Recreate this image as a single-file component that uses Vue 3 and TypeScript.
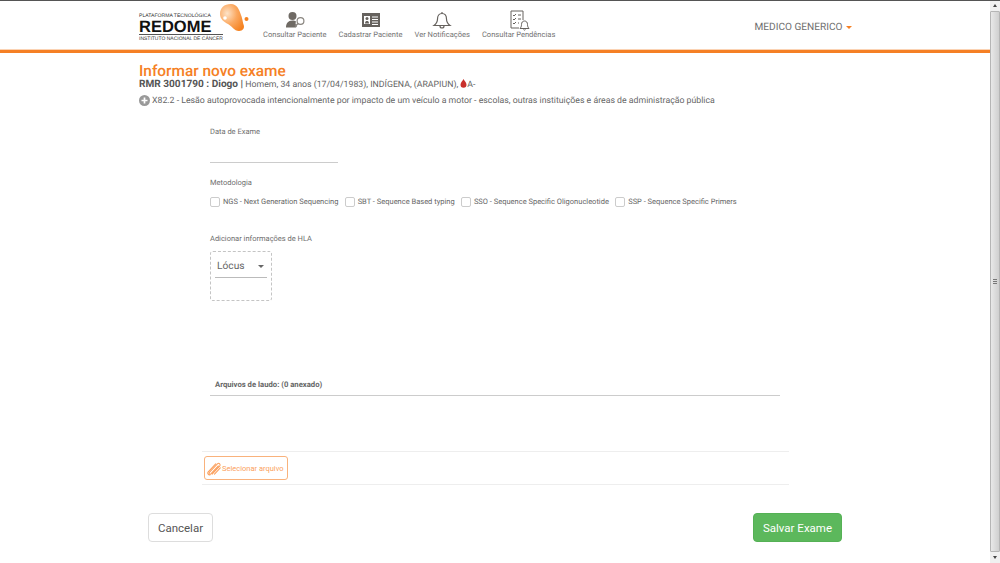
<script setup lang="ts">
const nav = [
  { label: 'Consultar Paciente', icon: 'search' },
  { label: 'Cadastrar Paciente', icon: 'card' },
  { label: 'Ver Notificações', icon: 'bell' },
  { label: 'Consultar Pendências', icon: 'list' },
]
const methods = [
  'NGS - Next Generation Sequencing',
  'SBT - Sequence Based typing',
  'SSO - Sequence Specific Oligonucleotide',
  'SSP - Sequence Specific Primers',
]
</script>

<template>
  <div class="window">
    <div class="page">
      <header class="header">
        <div class="logo">
          <div class="logo-text">
            <span class="logo-top">PLATAFORMA TECNOLÓGICA</span>
            <span class="logo-main">REDOME</span>
            <span class="logo-sub">INSTITUTO NACIONAL DE CÂNCER</span>
          </div>
          <svg class="logo-drop" width="30" height="30" viewBox="0 0 30 30">
            <defs>
              <radialGradient id="drop" cx="0.3" cy="0.35" r="0.8">
                <stop offset="0" stop-color="#fde3c8" />
                <stop offset="0.5" stop-color="#fba860" />
                <stop offset="1" stop-color="#f58220" />
              </radialGradient>
            </defs>
            <path d="M12 1C5 1 1 5 1 11c0 5 4 8 8 10 4 2 6 7 11 7 4 0 6-3 4.500-6.500-1-3-.5-4-2.500-9.500C20 6 18 1 12 1z" fill="url(#drop)" />
            <circle cx="27.500" cy="16" r="2" fill="#f58220" />
            <circle cx="6" cy="15" r="1.800" fill="#fff" />
          </svg>
        </div>
        <nav class="nav">
          <a v-for="n in nav" :key="n.label" class="nav-item">
            <svg class="nav-icon" width="26" height="22" viewBox="0 0 26 22">
              <g v-if="n.icon === 'search'">
                <circle cx="10.500" cy="7" r="4" fill="#6f6a64" />
                <path d="M4 18.500c0-4 2-7 6.500-7 1.500 0 2.500.3 3.500 1-1 2 0 3.500 1 4.500l-1 1.500z" fill="#6f6a64" />
                <circle cx="18.500" cy="12" r="3.400" fill="#fff" stroke="#8a8680" stroke-width="1.200" />
                <path d="M16 14.500l-3 3" stroke="#8a8680" stroke-width="1.600" />
              </g>
              <g v-else-if="n.icon === 'card'">
                <rect x="4" y="4" width="18" height="14" fill="#66625e" />
                <rect x="6" y="7" width="6" height="8" fill="#fff" />
                <circle cx="9" cy="9.500" r="1.500" fill="#66625e" />
                <path d="M7 14.500c0-2 1-2.500 2-2.500s2 .5 2 2.500z" fill="#66625e" />
                <path d="M14 8h6M14 10.500h6M14 13h6M14 15.500h6" stroke="#fff" stroke-width="1" />
              </g>
              <g v-else-if="n.icon === 'bell'" fill="none" stroke="#66625e" stroke-width="1.200">
                <path d="M13 4.500c-3 0-4.500 2.500-4.500 5.500 0 3-1.500 5-3.500 6.500h16c-2-1.500-3.500-3.500-3.500-6.500 0-3-1.500-5.500-4.500-5.500z" />
                <path d="M13 3v1.500M11 17c0 1.600 1 2 2 2s2-.4 2-2" />
              </g>
              <g v-else fill="none" stroke="#66625e" stroke-width="1" transform="translate(0 1)">
                <path d="M17 10V1H5v17h8" />
                <path d="M7 5l1 1 2-2M7 9l1 1 2-2M7 13l1 1 2-2M12 5h3M12 9h3M12 13h1" />
                <path d="M18.500 11c-2 0-3 1.500-3 3.500 0 2-.7 3-1.500 4h9c-.8-1-1.500-2-1.500-4 0-2-1-3.500-3-3.500zM17.500 19.500c.3.8 1.700.8 2 0" />
              </g>
            </svg>
            <span>{{ n.label }}</span>
          </a>
        </nav>
        <div class="user">MEDICO GENERICO <i class="caret"></i></div>
      </header>

      <main class="content">
        <h1 class="title">Informar novo exame</h1>
        <p class="patient"><b>RMR 3001790 : Diogo |</b> <span>Homem, 34 anos (17/04/1983), INDÍGENA, (ARAPIUN),</span>
          <svg class="blood" width="7" height="9" viewBox="0 0 7 9"><path d="M3.500 0C2.500 2 .5 3.500.5 5.800a3 3 0 0 0 6 0C6.500 3.500 4.500 2 3.500 0z" fill="#c9302c" /></svg><span>A-</span></p>
        <p class="diagnosis">
          <svg class="plus" width="11" height="11" viewBox="0 0 11 11"><circle cx="5.500" cy="5.500" r="5.500" fill="#999" /><path d="M5.500 2.500v6M2.500 5.500h6" stroke="#fff" stroke-width="1.700" /></svg>
          <span>X82.2 - Lesão autoprovocada intencionalmente por impacto de um veículo a motor - escolas, outras instituições e áreas de administração pública</span>
        </p>

        <section class="form">
          <label class="label">Data de Exame</label>
          <div class="date-input"></div>

          <label class="label method-label">Metodologia</label>
          <div class="methods">
            <label v-for="m in methods" :key="m" class="check"><i class="box"></i>{{ m }}</label>
          </div>

          <label class="label hla-label">Adicionar informações de HLA</label>
          <div class="locus">
            <div class="locus-select"><span>Lócus</span><i class="mini-caret"></i></div>
          </div>

          <div class="files-head">Arquivos de laudo: (0 anexado)</div>
        </section>

        <div class="upload">
          <button class="upload-btn" type="button">
            <svg width="15" height="16" viewBox="0 0 16 16" fill="none" stroke="#fb9f5c" stroke-width="1.100" stroke-linecap="round">
              <path d="M5.500 14.500l8-8.500c1.500-1.700-.7-4-2.400-2.400l-8.600 9c-1 1.200.4 2.700 1.600 1.700l8-8.500" />
              <path d="M3.500 15.200c-1.800.6-3.500-1.300-2.200-3l8-8.700" />
              <path d="M8 14.500l6.200-6.700" />
            </svg>
            <span>Selecionar arquivo</span>
          </button>
        </div>

        <div class="actions">
          <button class="btn cancel" type="button">Cancelar</button>
          <button class="btn save" type="button">Salvar Exame</button>
        </div>
      </main>
    </div>

    <div class="scrollbar">
      <span class="arrow up"></span>
      <div class="thumb"><i></i></div>
      <span class="arrow down"></span>
    </div>
  </div>
</template>

<style>
html, body { margin: 0; padding: 0; overflow: hidden; background: #fff; }
</style>

<style scoped>
* { box-sizing: border-box; }
.window {
  display: flex;
  width: 1000px;
  height: 563px;
  font-family: Roboto, "Liberation Sans", sans-serif;
  color: #666;
  border-top: 1px solid #555;
  overflow: hidden;
  text-rendering: geometricPrecision;
}
.page { flex: 1; min-width: 0; }
.header {
  display: flex;
  height: 52px;
  padding: 0 139px;
  border-bottom: 3px solid #f58025;
  box-shadow: inset 0 -1px 0 #fbd3b4;
}
.logo { position: relative; width: 110px; flex: none; }
.logo-text { display: flex; flex-direction: column; padding-top: 12px; color: #222; }
.logo-top { font: 5.100px/7px "Liberation Sans", sans-serif; color: #333; white-space: nowrap; }
.logo-main {
  font: 700 16.500px/14px "Liberation Sans", sans-serif;
  color: #111;
  height: 15px;
  border-bottom: 1px solid #555;
  width: 84px;
}
.logo-sub { font: 5px/8px "Liberation Sans", sans-serif; color: #333; white-space: nowrap; }
.logo-drop { position: absolute; left: 80px; top: 2px; }
.nav { display: flex; padding-left: 14px; gap: 12px; }
.nav-item {
  display: flex;
  flex-direction: column;
  align-items: center;
  font-size: 7.550px;
  line-height: 11px;
  color: #737373;
  white-space: nowrap;
  padding-top: 8px;
}
.nav-icon { margin-bottom: -2px; }
.user {
  margin-left: auto;
  margin-right: -1px;
  padding-top: 21px;
  font-size: 10.100px;
  line-height: 12px;
  color: #6e6e6e;
  white-space: nowrap;
}
.caret {
  display: inline-block;
  width: 0;
  height: 0;
  margin-left: 1px;
  vertical-align: middle;
  border-top: 3px solid #f58025;
  border-left: 3px solid transparent;
  border-right: 3px solid transparent;
}
.content { padding: 10px 148px 0 139px; }
.title {
  margin: 0;
  font-size: 15.400px;
  line-height: 16px;
  font-weight: 500;
  color: #f58025;
}
.patient {
  margin: 0;
  font-size: 8.750px;
  line-height: 11px;
  white-space: nowrap;
  color: #666;
}
.patient b { font-size: 10.100px; color: #555; font-weight: 700; }
.blood { margin: 0 0 -1px 2px; }
.diagnosis {
  display: flex;
  align-items: center;
  gap: 2px;
  margin: 4px 0 0;
  font-size: 8.740px;
  line-height: 12px;
  white-space: nowrap;
  color: #666;
}
.plus { margin-top: -2px; }
.form { padding-left: 71px; padding-top: 20px; width: 642px; }
.label { display: block; font-size: 7.500px; line-height: 10px; color: #6e6e6e; }
.date-input { width: 128px; height: 26px; border-bottom: 1px solid #ccc; }
.method-label { margin-top: 15px; }
.methods { display: flex; margin-top: 8px; gap: 6.300px; }
.check {
  display: flex;
  align-items: center;
  gap: 3px;
  font-size: 7.500px;
  line-height: 11px;
  color: #666;
  white-space: nowrap;
}
.box {
  display: block;
  width: 10px;
  height: 10px;
  border: 1px solid #ccc;
  border-radius: 2px;
}
.hla-label { margin-top: 27px; }
.locus {
  width: 62px;
  height: 50px;
  margin-top: 7px;
  padding: 2px 4px 0;
  border: 1px dashed #c4c4c4;
  border-radius: 3px;
}
.locus-select {
  display: flex;
  align-items: center;
  justify-content: space-between;
  height: 24px;
  padding: 1px 3px 0 2px;
  font-size: 10.200px;
  color: #666;
  border-bottom: 1px solid #bbb;
}
.mini-caret {
  width: 0;
  height: 0;
  border-top: 3.500px solid #666;
  border-left: 3px solid transparent;
  border-right: 3px solid transparent;
}
.files-head {
  width: 570px;
  margin-top: 78px;
  padding: 0 5px 5px;
  font-size: 7.700px;
  line-height: 11px;
  font-weight: 700;
  color: #666;
  border-bottom: 1px solid #ccc;
}
.upload {
  width: 587px;
  margin: 55px 0 0 63px;
  padding: 4px 0;
  border-top: 1px solid #eee;
  border-bottom: 1px solid #eee;
}
.upload-btn {
  display: flex;
  align-items: center;
  gap: 0;
  width: 84px;
  height: 24px;
  margin-left: 2px;
  padding: 0 0 0 2px;
  background: #fff;
  border: 1px solid #f9b27c;
  border-radius: 3px;
  color: #fb9f5c;
  font: 7.500px Roboto, sans-serif;
  white-space: nowrap;
}
.actions { display: flex; justify-content: space-between; margin: 28px 0 0 9px; }
.btn {
  height: 29px;
  border-radius: 4px;
  font: 11.500px Roboto, sans-serif;
  padding: 0;
}
.cancel { width: 65px; background: #fff; border: 1px solid #ddd; color: #555; }
.save { width: 89px; background: #5cb85c; border: 1px solid #55b155; color: #fff; }
.scrollbar {
  flex: none;
  width: 10px;
  display: flex;
  flex-direction: column;
  background: #f0f0f0;
  margin-top: -1px;
}
.arrow { display: block; height: 11px; position: relative; }
.arrow::after {
  content: "";
  position: absolute;
  left: 3px;
  top: 4px;
  border-left: 2px solid transparent;
  border-right: 2px solid transparent;
}
.up::after { border-bottom: 3px solid #444; }
.down::after { border-top: 3px solid #444; }
.thumb {
  flex: 1;
  display: flex;
  align-items: center;
  justify-content: center;
  background: linear-gradient(90deg, #e8e8e8, #cfcfcf);
  border: 1px solid #b5b5b5;
  border-radius: 1px;
}
.thumb i { display: block; width: 4px; height: 5px; background: repeating-linear-gradient(#777 0 1px, transparent 1px 2px); }
</style>
